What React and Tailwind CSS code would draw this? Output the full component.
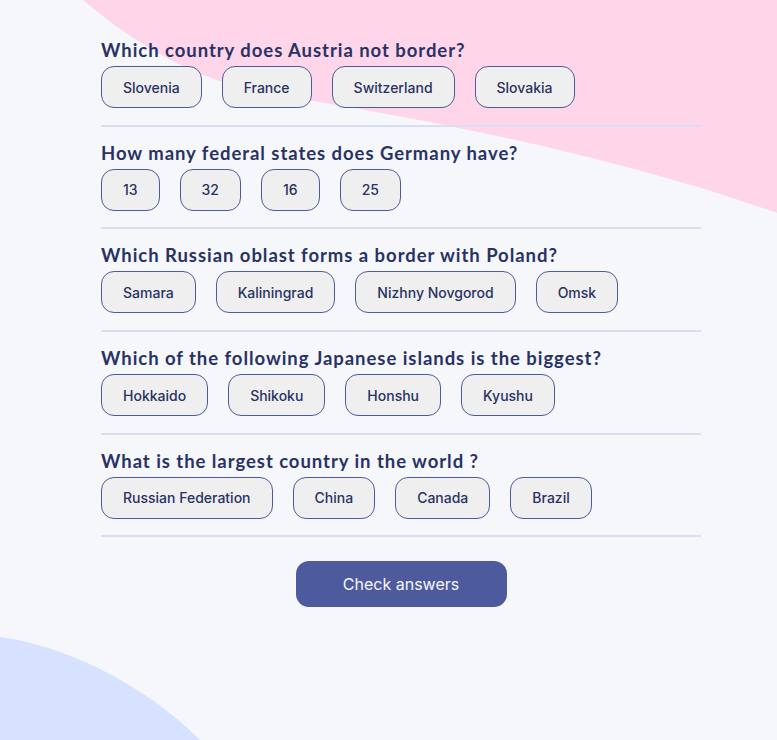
import React from "react";

const questions = [
  { q: "Which country does Austria not border?", a: ["Slovenia", "France", "Switzerland", "Slovakia"] },
  { q: "How many federal states does Germany have?", a: ["13", "32", "16", "25"] },
  { q: "Which Russian oblast forms a border with Poland?", a: ["Samara", "Kaliningrad", "Nizhny Novgorod", "Omsk"] },
  { q: "Which of the following Japanese islands is the biggest?", a: ["Hokkaido", "Shikoku", "Honshu", "Kyushu"] },
  { q: "What is the largest country in the world ?", a: ["Russian Federation", "China", "Canada", "Brazil"] },
];

export default function App() {
  return (
    <div className="relative h-[740px] w-full overflow-hidden bg-[#f5f7fb]">
      <svg className="absolute left-0 top-0" width="777" height="740" viewBox="0 0 777 740">
        <path d="M83,0 C130,40 190,78 260,92 C400,115 600,150 777,213 L777,0 Z" fill="#fed5e9" />
        <path d="M0,637 C60,645 140,680 200,740 L0,740 Z" fill="#d6e2ff" />
      </svg>
      <div className="relative ml-[101px] w-[600px] pt-[39px]">
        {questions.map((item, i) => (
          <div
            key={i}
            className={`border-b-2 border-[#dbdef0] pb-[16.7px] ${i === 0 ? "" : "pt-[15px]"}`}
          >
            <h2 className="font-['Lato',sans-serif] text-[18.5px] font-bold leading-[22px] tracking-[0.95px] text-[#293264]">
              {item.q}
            </h2>
            <div className="mt-[5px] flex gap-5">
              {item.a.map((ans) => (
                <button
                  key={ans}
                  className="h-[42px] rounded-[13px] border border-[#4d5b9e] bg-[#efefef] px-[21px] font-['Inter',sans-serif] text-[14px] font-medium text-[#293264]"
                >
                  {ans}
                </button>
              ))}
            </div>
          </div>
        ))}
        <div className="mt-[24px] flex justify-center">
          <button className="h-[46px] w-[211px] rounded-[13px] bg-[#4d5b9e] font-['Inter',sans-serif] text-[16px] text-[#f5f7fb]">
            Check answers
          </button>
        </div>
      </div>
    </div>
  );
}
